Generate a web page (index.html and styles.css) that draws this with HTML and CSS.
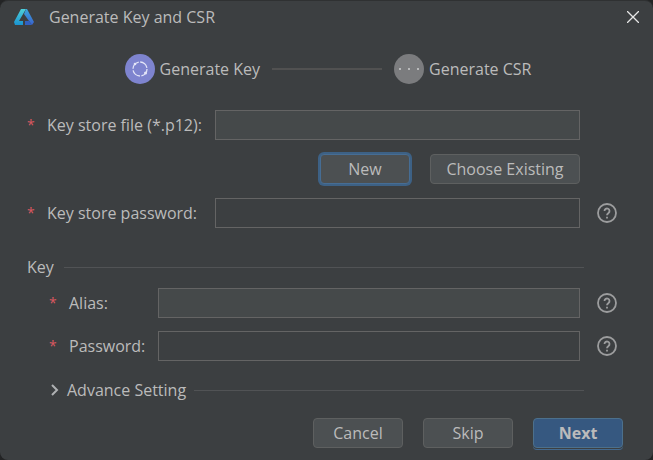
FILE: index.html
```html
<!DOCTYPE html>
<html lang="en">
<head>
    <meta charset="UTF-8">
    <meta name="viewport" content="width=device-width, initial-scale=1.0">
    <title>Generate Key and CSR</title>
    <link rel="stylesheet" href="styles.css">
</head>
<body>

<form class="dialog">
    <header class="title-bar">
        <svg class="logo" viewBox="0 0 20 16" aria-hidden="true">
            <defs>
                <linearGradient id="logo-left" x1="0" y1="0" x2="0" y2="1">
                    <stop offset="0" stop-color="#4fd0d8"/>
                    <stop offset="1" stop-color="#1a93d0"/>
                </linearGradient>
                <linearGradient id="logo-right" x1="0" y1="0" x2="0" y2="1">
                    <stop offset="0" stop-color="#38a6de"/>
                    <stop offset="1" stop-color="#3b62cc"/>
                </linearGradient>
            </defs>
            <path d="M7 0h5L5 12h4v4H1l-1-3z" fill="url(#logo-left)"/>
            <path d="M12 0h1l7 13-2 3-3-4-5-7z" fill="url(#logo-right)"/>
            <path d="M11 12h4l3 4h-7z" fill="#3160c0"/>
        </svg>
        <h1>Generate Key and CSR</h1>
        <button type="button" class="close" aria-label="Close">
            <svg viewBox="0 0 12 12" width="12" height="12"><path d="M0 0l12 12M12 0L0 12" stroke="#e6e6e6" stroke-width="1.3"/></svg>
        </button>
    </header>

    <div class="steps">
        <div class="step">
            <svg width="30" height="30" viewBox="0 0 30 30" aria-hidden="true">
                <circle cx="15" cy="15" r="15" fill="#7e84cf"/>
                <circle cx="15" cy="15" r="7" fill="none" stroke="#e4e6f8" stroke-width="1.3" stroke-dasharray="9.500 1.500"/>
                <circle cx="10" cy="10" r="1.300" fill="#e4e6f8"/>
                <circle cx="20.500" cy="19" r="1.500" fill="#e4e6f8"/>
            </svg>
            <span>Generate Key</span>
        </div>
        <div class="step-line"></div>
        <div class="step">
            <svg width="30" height="30" viewBox="0 0 30 30" aria-hidden="true">
                <circle cx="15" cy="15" r="15" fill="#7b7c7e"/>
                <path d="M5 14h2v2H5zM14 14h2v2h-2zM23 14h2v2h-2z" fill="#b9babb"/>
            </svg>
            <span>Generate CSR</span>
        </div>
    </div>

    <main class="content">
        <div class="row">
            <span class="required">*</span>
            <label for="store-file">Key store file (*.p12):</label>
            <input type="text" id="store-file" class="filled">
        </div>
        <div class="file-buttons">
            <button type="button" class="focused">New</button>
            <button type="button" class="wide">Choose Existing</button>
        </div>
        <div class="row">
            <span class="required">*</span>
            <label for="store-password">Key store password:</label>
            <input type="password" id="store-password">
            <button type="button" class="help" aria-label="Key store password help">
                <svg width="20" height="20" viewBox="0 0 20 20"><circle cx="10" cy="10" r="9" fill="none" stroke="#9c9d9e" stroke-width="1.800"/><path d="M7.500 8a2.500 2.500 0 1 1 4 2C10.400 10.800 10 11 10 12.200M10 13.700v1.700" fill="none" stroke="#9c9d9e" stroke-width="1.800"/></svg>
            </button>
        </div>

        <h2 class="divider">Key</h2>

        <div class="row nested">
            <span class="required">*</span>
            <label for="alias">Alias:</label>
            <input type="text" id="alias" class="filled">
            <button type="button" class="help" aria-label="Alias help">
                <svg width="20" height="20" viewBox="0 0 20 20"><circle cx="10" cy="10" r="9" fill="none" stroke="#9c9d9e" stroke-width="1.800"/><path d="M7.500 8a2.500 2.500 0 1 1 4 2C10.400 10.800 10 11 10 12.200M10 13.700v1.700" fill="none" stroke="#9c9d9e" stroke-width="1.800"/></svg>
            </button>
        </div>
        <div class="row nested">
            <span class="required">*</span>
            <label for="password">Password:</label>
            <input type="password" id="password">
            <button type="button" class="help" aria-label="Password help">
                <svg width="20" height="20" viewBox="0 0 20 20"><circle cx="10" cy="10" r="9" fill="none" stroke="#9c9d9e" stroke-width="1.800"/><path d="M7.500 8a2.500 2.500 0 1 1 4 2C10.400 10.800 10 11 10 12.200M10 13.700v1.700" fill="none" stroke="#9c9d9e" stroke-width="1.800"/></svg>
            </button>
        </div>

        <button type="button" class="divider advance" aria-expanded="false">
            <svg width="8" height="12" viewBox="0 0 8 12" aria-hidden="true"><path d="M1 1l5 5-5 5" fill="none" stroke="#afb1b3" stroke-width="2"/></svg>
            Advance Setting
        </button>
    </main>

    <footer class="actions">
        <button type="button">Cancel</button>
        <button type="button">Skip</button>
        <button type="submit" class="primary">Next</button>
    </footer>
</form>

</body>
</html>
```
FILE: styles.css
```css
* {
    box-sizing: border-box;
}
body {
    margin: 0;
    background: #232425;
    color: #bbbbbb;
    font-family: "Open Sans", "Noto Sans", sans-serif;
    font-size: 16px;
    line-height: 20px;
}
button, input {
    font: inherit;
    color: inherit;
}
h1, h2 {
    margin: 0;
    font-size: 16px;
    font-weight: normal;
}
.dialog {
    display: flex;
    flex-direction: column;
    min-height: 100vh;
    padding: 0 30px 12px 27px;
    background: #3c3f41;
    border-top: 1px solid #2f3132;
    border-radius: 8px;
}
.title-bar {
    display: flex;
    align-items: center;
    height: 32px;
    margin: 0 -16px 0 -13px;
}
.logo {
    width: 20px;
    height: 16px;
    margin-right: 15px;
}
.close {
    display: flex;
    margin-left: auto;
    padding: 0;
    background: none;
    border: none;
}
.steps {
    display: flex;
    justify-content: center;
    align-items: center;
    gap: 12px;
    margin: 21px 0 26px;
    padding-left: 6px;
}
.step {
    display: flex;
    align-items: center;
    gap: 5px;
}
.step-line {
    width: 110px;
    height: 2px;
    background: #515151;
}
.content {
    margin-right: 43px;
}
.row {
    display: grid;
    grid-template-columns: 20px 168px 1fr;
    align-items: center;
    position: relative;
}
.row.nested {
    grid-template-columns: 20px 89px 1fr;
    margin: 0 0 13px 22px;
}
.required {
    color: #db5860;
    font-size: 14px;
}
.row input {
    min-width: 0;
    height: 30px;
    border: 1px solid #646464;
    border-radius: 0;
    background: #3c3f41;
    outline: none;
}
.row input.filled {
    background: #45494a;
}
.help {
    position: absolute;
    left: calc(100% + 17px);
    display: flex;
    padding: 0;
    background: none;
    border: none;
}
.file-buttons, .actions {
    display: flex;
    justify-content: flex-end;
    gap: 20px;
}
.file-buttons {
    margin: 14px 0;
}
.file-buttons button, .actions button {
    width: 90px;
    height: 30px;
    padding: 0;
    background: #4c5052;
    border: 1px solid #5e6060;
    border-radius: 4px;
}
.file-buttons .wide {
    width: 150px;
}
.file-buttons .focused {
    border-color: #466d94;
    box-shadow: 0 0 0 2px #3d6185;
}
.divider {
    display: flex;
    align-items: center;
    gap: 10px;
    margin: 29px -4px 11px 0;
}
.divider::after {
    content: "";
    flex: 1;
    height: 1px;
    background: #515355;
}
.advance {
    width: calc(100% - 20px);
    gap: 8px;
    margin: 19px 0 0 24px;
    padding: 0;
    background: none;
    border: none;
}
.actions {
    margin-top: auto;
}
.actions .primary {
    background: #365880;
    border-color: #4c708c;
    font-weight: bold;
    box-shadow: 0 1px #3c3f41, 0 2px #43698f;
}
```
